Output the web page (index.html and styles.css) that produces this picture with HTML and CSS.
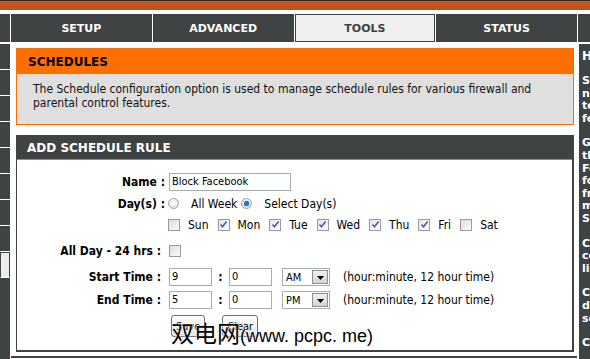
FILE: index.html
```html
<!DOCTYPE html>
<html lang="en">
<head>
  <meta charset="UTF-8" />
  <title>TOOLS - Schedules</title>
  <link rel="stylesheet" href="styles.css">
</head>
<body>

  <div id="topbar"></div>

  <div id="nav">
    <div class="nav-stub"></div>
    <div class="tab">SETUP</div>
    <div class="tab">ADVANCED</div>
    <div class="tab tab-on"><span>TOOLS</span></div>
    <div class="tab">STATUS</div>
    <div class="nav-stub nav-end"></div>
  </div>

  <div id="page">
    <div id="sidebar">
      <div class="side-item"></div>
      <div class="side-item"></div>
      <div class="side-item"></div>
      <div class="side-item"></div>
      <div class="side-item"></div>
      <div class="side-item"></div>
      <div class="side-item"></div>
      <div class="side-item"></div>
      <div class="side-item side-on"></div>
    </div>

    <div id="main">
      <div class="box box-orange">
        <div class="box-head">SCHEDULES</div>
        <div class="box-body">The Schedule configuration option is used to manage schedule rules for various firewall and parental control features.</div>
      </div>

      <div class="box box-dark">
        <div class="box-head">ADD SCHEDULE RULE</div>
        <div class="form">
          <div class="row row-name">
            <div class="lbl lbl-near">Name :</div>
            <span class="txt txt-name">Block Facebook</span>
          </div>
          <div class="row row-days">
            <div class="lbl lbl-near">Day(s) :</div>
            <span class="radio first"></span><span class="opt">All Week</span>
            <span class="radio radio-on"><i></i></span><span class="opt">Select Day(s)</span>
          </div>
          <div class="row row-week">
            <div class="lbl"></div>
            <span class="cb first"></span><span class="day">Sun</span>
            <span class="cb cb-on"><svg viewBox="0 0 9 9"><path d="M1.5 4.5 L3.5 6.8 L7.6 1.6" /></svg></span><span class="day">Mon</span>
            <span class="cb cb-on"><svg viewBox="0 0 9 9"><path d="M1.5 4.5 L3.5 6.8 L7.6 1.6" /></svg></span><span class="day">Tue</span>
            <span class="cb cb-on"><svg viewBox="0 0 9 9"><path d="M1.5 4.5 L3.5 6.8 L7.6 1.6" /></svg></span><span class="day">Wed</span>
            <span class="cb cb-on"><svg viewBox="0 0 9 9"><path d="M1.5 4.5 L3.5 6.8 L7.6 1.6" /></svg></span><span class="day">Thu</span>
            <span class="cb cb-on"><svg viewBox="0 0 9 9"><path d="M1.5 4.5 L3.5 6.8 L7.6 1.6" /></svg></span><span class="day">Fri</span>
            <span class="cb"></span><span class="day">Sat</span>
          </div>
          <div class="row row-allday">
            <div class="lbl">All Day - 24 hrs :</div>
            <span class="cb"></span>
          </div>
          <div class="row row-time">
            <div class="lbl">Start Time :</div>
            <span class="txt txt-time">9</span>
            <span class="colon">:</span>
            <span class="txt txt-time">0</span>
            <span class="sel"><span class="sel-val">AM</span><span class="sel-btn"><svg viewBox="0 0 7 4"><path d="M0 0 H7 L3.5 4 Z" /></svg></span></span>
            <span class="note">(hour:minute, 12 hour time)</span>
          </div>
          <div class="row row-time">
            <div class="lbl">End Time :</div>
            <span class="txt txt-time">5</span>
            <span class="colon">:</span>
            <span class="txt txt-time">0</span>
            <span class="sel"><span class="sel-val">PM</span><span class="sel-btn"><svg viewBox="0 0 7 4"><path d="M0 0 H7 L3.5 4 Z" /></svg></span></span>
            <span class="note">(hour:minute, 12 hour time)</span>
          </div>
          <div class="row row-btns">
            <div class="lbl"></div>
            <button class="btn">Save</button>
            <button class="btn">Clear</button>
          </div>
        </div>
      </div>

      <div class="watermark"><span class="wm-cn">双电网</span>(www. pcpc. me)</div>
    </div>

    <div id="hints">
      <div class="hints-title">Helpful Hints..</div>
      <p>Schedules are used with a<br>number of other features<br>to define when those<br>features are in effect.</p>
      <p>Give each schedule a name<br>that is meaningful to you.<br>For example, a schedule<br>for Monday through Friday<br>from 3:00pm to 9:00pm,<br>might be called "After<br>School".</p>
      <p>Click Save to add a<br>completed schedule to the<br>list below.</p>
      <p>Click Clear to<br>discard unsaved<br>schedule changes.</p>
      <p>Click Edit to change</p>
    </div>
  </div>

</body>
</html>
```

FILE: styles.css
```css
* { box-sizing: border-box; }
body, html {
  margin: 0; padding: 0;
  width: 590px; height: 359px;
  overflow: hidden;
  background: #fff;
  font-family: "DejaVu Sans Condensed", "DejaVu Sans", sans-serif;
  font-size: 12px;
  color: #000;
}
#topbar {
  height: 10px;
  background: linear-gradient(#c65a20, #c0521d);
  border-top: 1px solid #3a2a20;
}
#nav {
  display: flex;
  gap: 1px;
  margin-top: 4px;
  height: 28px;
  background: #fff;
}
.nav-stub {
  width: 10px;
  background: #404343;
}
.nav-end { width: 12px; }
.tab {
  width: 141px;
  background: #404343;
  color: #fff;
  font-family: "DejaVu Sans", sans-serif;
  font-weight: bold;
  font-size: 11px;
  display: flex;
  align-items: center;
  justify-content: center;
}
.tab:first-of-type { width: 140px; }
.tab-on { padding: 1px; }
.tab-on span {
  flex: 1;
  align-self: stretch;
  display: flex;
  align-items: center;
  justify-content: center;
  background: #f0f0f0;
  color: #404343;
}
#page {
  display: flex;
  margin-top: 2px;
  height: 315px;
}
#sidebar {
  width: 11px;
  background: #404343;
  border-right: 1px solid #fff;
}
.side-item {
  height: 26px;
  border-bottom: 1px solid #fff;
}
.side-on {
  background: #ececec;
  border: 1px solid #404343;
  border-bottom: 1px solid #fff;
}
#main {
  position: relative;
  width: 566px;
  height: 314px;
  padding: 4px 3px 0 5px;
  border-bottom: 2px solid #404343;
}
.box { width: 558px; }
.box-head {
  font-family: "DejaVu Sans", sans-serif;
  font-weight: bold;
  font-size: 12px;
  padding-left: 11px;
}
.box-orange { border: 1px solid #ff6f00; }
.box-orange .box-head {
  height: 25px;
  line-height: 26px;
  background: #ff6f00;
  color: #000;
}
.box-body {
  height: 50px;
  background: #dfdfdf;
  padding: 8px 10px 0 16px;
  line-height: 14px;
  color: #111;
}
.box-dark {
  margin-top: 10px;
  border: 2px solid #404343;
  border-top: 0;
  border-left-width: 1px;
}
.box-dark .box-head {
  height: 25px;
  line-height: 26px;
  background: #404343;
  border-bottom: 1px solid #8a8a8a;
  color: #fff;
  padding-left: 10px;
}
.form {
  height: 190px;
  padding-top: 11px;
}
.row {
  display: flex;
  align-items: center;
  height: 22px;
}
.row-days, .row-week { height: 21px; }
.row-allday { margin-top: 5px; }
.row-time { margin-top: 4px; }
.row-time + .row-time { margin-top: 1px; }
.row-btns { margin-top: 3px; height: 24px; }
.lbl {
  width: 152px;
  flex: none;
  text-align: right;
  padding-right: 8px;
  font-weight: bold;
}
.lbl-near { padding-right: 4px; }
.txt {
  height: 18px;
  border: 1px solid #a5acb2;
  font-size: 11px;
  line-height: 16px;
  padding-left: 2px;
  background: #fff;
}
.txt-name { width: 122px; }
.txt-time { width: 43px; }
.colon {
  width: 17px;
  text-align: center;
  font-weight: bold;
}
.first { margin-left: -1px; }
.radio {
  width: 11px; height: 11px;
  border-radius: 50%;
  border: 1px solid #a0a0a0;
  background: radial-gradient(circle at 40% 35%, #fff, #d8d8d8);
  display: flex;
  align-items: center;
  justify-content: center;
}
.radio-on i {
  width: 5px; height: 5px;
  border-radius: 50%;
  background: #1d7fbf;
  box-shadow: 0 0 1px #0a4f80;
}
.opt { margin: 0 4px 0 12px; }
.cb {
  width: 12px; height: 12px;
  border: 1px solid #9a9a9a;
  background: linear-gradient(135deg, #dcdcdc, #fbfbfb);
  display: flex;
  align-items: center;
  justify-content: center;
}
.cb svg { width: 9px; height: 9px; }
.cb path {
  fill: none;
  stroke: #4b5fa6;
  stroke-width: 1.6;
}
.cb-on { background: linear-gradient(135deg, #e4e4ee, #fbfbff); }
.day { margin: 0 9px 0 8px; }
.sel {
  width: 48px; height: 18px;
  margin-left: 10px;
  border: 1px solid #a5acb2;
  display: flex;
  align-items: center;
  font-size: 11px;
}
.sel-val { flex: 1; padding-left: 3px; }
.sel-btn {
  width: 16px; height: 14px;
  margin-right: 1px;
  background: linear-gradient(#f0f0f0, #d4d4d4);
  border: 1px solid #8e8e8e;
  display: flex;
  align-items: flex-end;
  justify-content: center;
  padding-bottom: 3px;
}
.sel-btn svg { width: 7px; height: 4px; }
.note { margin-left: 13px; }
.btn {
  height: 22px;
  margin-left: 2px;
  margin-right: 15px;
  padding: 0 4px;
  font-family: "DejaVu Sans Condensed", sans-serif;
  font-size: 11px;
  background: linear-gradient(#fdfdfd, #e6e6e6);
  border: 1px solid #707070;
  border-radius: 3px;
  color: #000;
}
.watermark {
  position: absolute;
  left: 160px;
  top: 276px;
  font-family: "Liberation Sans", "Noto Sans CJK SC", sans-serif;
  font-size: 18px;
  line-height: 24px;
  color: #000;
  white-space: nowrap;
  text-shadow: 0 0 2px #fff, 0 0 2px #fff;
}
.wm-cn {
  font-family: "Noto Sans CJK SC", sans-serif;
  font-size: 23px;
}
#hints {
  flex: 1;
  margin-left: 2px;
  background: #404343;
  color: #fff;
  font-family: "DejaVu Sans", sans-serif;
  font-weight: bold;
  font-size: 11px;
  line-height: 12.6px;
  padding: 6px 0 0 3px;
  white-space: nowrap;
  overflow: hidden;
}
.hints-title { font-size: 12px; height: 25px; }
#hints p { margin: 0 0 12px; }
```
